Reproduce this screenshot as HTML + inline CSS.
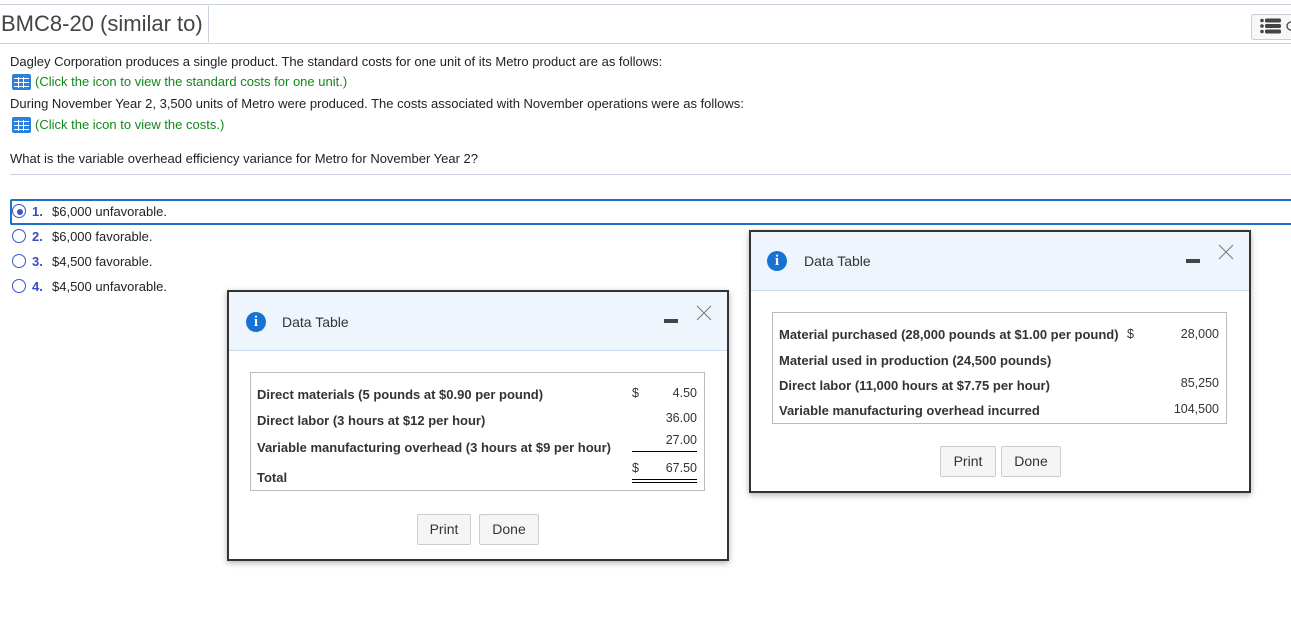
<!DOCTYPE html>
<html><head><style>
body{margin:0;width:1291px;height:632px;background:#fff;font-family:"Liberation Sans",Arial,sans-serif;position:relative;overflow:hidden;color:#222}
.a{position:absolute}
.t{font-size:13px;white-space:nowrap}
.g{color:#13881a}
.ic{position:absolute;width:19px;height:16px;background:#2c7fdc;border-radius:2px}
.ic i{position:absolute;background:#fff}
.rad{position:absolute;width:12px;height:12px;border:1.5px solid #3b55c9;border-radius:50%;background:#fff}
.num{color:#3b49c6;font-weight:bold;display:inline-block;width:20px}
.dlg{position:absolute;border:2px solid #333;background:#fff;box-shadow:0 2px 6px rgba(0,0,0,.3)}
.hd{position:absolute;left:0;top:0;right:0;height:58px;background:#eef5fd;border-bottom:1px solid #c9dcef}
.inf{position:absolute;width:20px;height:20px;border-radius:50%;background:#1773d3;color:#fff;font:bold 15px "Liberation Serif",serif;text-align:center;line-height:20px}
.ttl{position:absolute;font-size:14px;color:#333}
.min{position:absolute;width:14px;height:4px;background:#444}
.tb{position:absolute;border:1px solid #bbb}
.b{font-weight:bold;font-size:13px;color:#333;position:absolute;white-space:nowrap}
.n{font-size:12.5px;color:#333;position:absolute;text-align:right}
.btn{position:absolute;border:1px solid #ccc;border-radius:2px;background:#f5f5f5;font-size:14px;color:#333;text-align:center;line-height:29px}
</style></head><body>
<div class="a" style="left:0;top:4px;width:1291px;height:1px;background:#ccd3e0"></div>
<div class="a" style="left:0;top:43px;width:1291px;height:1px;background:#ccd3e0"></div>
<div class="a" style="left:208px;top:6px;width:1px;height:36px;background:#ccd3e0"></div>
<div class="a" style="left:1px;top:11px;font-size:22px;color:#444">BMC8-20 (similar to)</div>
<div class="a" style="left:1251px;top:14px;width:44px;height:24px;border:1px solid #ccc;border-radius:3px;background:#f7f7f7"></div>
<svg class="a" style="left:1260px;top:18px" width="32" height="16"><g fill="#444"><circle cx="2" cy="2.5" r="1.8"/><circle cx="2" cy="8" r="1.8"/><circle cx="2" cy="13.5" r="1.8"/><rect x="5" y="0.5" width="16" height="4" rx="1.5"/><rect x="5" y="6" width="16" height="4" rx="1.5"/><rect x="5" y="11.5" width="16" height="4" rx="1.5"/></g><path d="M31 4a4 4 0 1 0 0 8" stroke="#444" fill="none" stroke-width="1.3"/></svg>

<div class="a t" style="left:10px;top:54px">Dagley Corporation produces a single product. The standard costs for one unit of its Metro product are as follows:</div>
<div class="ic" style="left:12px;top:74px"><i style="left:2px;top:4px;width:15px;height:1px"></i><i style="left:2px;top:8px;width:15px;height:1px"></i><i style="left:2px;top:12px;width:15px;height:1px"></i><i style="left:6px;top:3px;width:1px;height:11px"></i><i style="left:11px;top:3px;width:1px;height:11px"></i></div>
<div class="a t g" style="left:35px;top:74px">(Click the icon to view the standard costs for one unit.)</div>
<div class="a t" style="left:10px;top:96px">During November Year 2, 3,500 units of Metro were produced. The costs associated with November operations were as follows:</div>
<div class="ic" style="left:12px;top:117px"><i style="left:2px;top:4px;width:15px;height:1px"></i><i style="left:2px;top:8px;width:15px;height:1px"></i><i style="left:2px;top:12px;width:15px;height:1px"></i><i style="left:6px;top:3px;width:1px;height:11px"></i><i style="left:11px;top:3px;width:1px;height:11px"></i></div>
<div class="a t g" style="left:35px;top:117px">(Click the icon to view the costs.)</div>
<div class="a t" style="left:10px;top:151px">What is the variable overhead efficiency variance for Metro for November Year 2?</div>
<div class="a" style="left:10px;top:174px;width:1281px;height:1px;background:#ccd3e0"></div>

<div class="a" style="left:10px;top:199px;width:1290px;height:22px;border:2px solid #1a73c9;border-radius:2px"></div>
<div class="rad" style="left:12px;top:204px"></div><div class="a" style="left:16.5px;top:208.5px;width:6px;height:6px;border-radius:50%;background:#3b55c9"></div>
<div class="a t" style="left:32px;top:204px"><span class="num">1.</span>$6,000 unfavorable.</div>
<div class="rad" style="left:12px;top:229px"></div><div class="a t" style="left:32px;top:229px"><span class="num">2.</span>$6,000 favorable.</div>
<div class="rad" style="left:12px;top:254px"></div><div class="a t" style="left:32px;top:254px"><span class="num">3.</span>$4,500 favorable.</div>
<div class="rad" style="left:12px;top:279px"></div><div class="a t" style="left:32px;top:279px"><span class="num">4.</span>$4,500 unfavorable.</div>

<!-- dialog 2 -->
<div class="dlg" style="left:749px;top:230px;width:498px;height:259px">
<div class="hd"></div>
<div class="inf" style="left:16px;top:19px">i</div>
<div class="ttl" style="left:53px;top:21px">Data Table</div>
<div class="min" style="left:435px;top:27px"></div>
<svg class="a" style="left:467px;top:12px" width="16" height="16"><path d="M1 1L15 15M15 1L1 15" stroke="#777" stroke-width="1"/></svg>
<div class="tb" style="left:21px;top:80px;width:453px;height:110px"></div>
<div class="b" style="left:28px;top:95px">Material purchased (28,000 pounds at $1.00 per pound)</div>
<div class="n" style="left:376px;top:95px">$</div><div class="n" style="left:400px;top:95px;width:68px">28,000</div>
<div class="b" style="left:28px;top:121px">Material used in production (24,500 pounds)</div>
<div class="b" style="left:28px;top:146px">Direct labor (11,000 hours at $7.75 per hour)</div>
<div class="n" style="left:400px;top:144px;width:68px">85,250</div>
<div class="b" style="left:28px;top:171px">Variable manufacturing overhead incurred</div>
<div class="n" style="left:400px;top:170px;width:68px">104,500</div>
<div class="btn" style="left:189px;top:214px;width:54px;height:29px">Print</div>
<div class="btn" style="left:250px;top:214px;width:58px;height:29px">Done</div>
</div>

<!-- dialog 1 -->
<div class="dlg" style="left:227px;top:290px;width:498px;height:267px">
<div class="hd"></div>
<div class="inf" style="left:17px;top:20px">i</div>
<div class="ttl" style="left:53px;top:22px">Data Table</div>
<div class="min" style="left:435px;top:27px"></div>
<svg class="a" style="left:467px;top:13px" width="16" height="16"><path d="M1 1L15 15M15 1L1 15" stroke="#777" stroke-width="1"/></svg>
<div class="tb" style="left:21px;top:80px;width:453px;height:117px"></div>
<div class="b" style="left:28px;top:95px">Direct materials (5 pounds at $0.90 per pound)</div>
<div class="n" style="left:403px;top:94px">$</div><div class="n" style="left:400px;top:94px;width:68px">4.50</div>
<div class="b" style="left:28px;top:121px">Direct labor (3 hours at $12 per hour)</div>
<div class="n" style="left:400px;top:119px;width:68px">36.00</div>
<div class="b" style="left:28px;top:148px">Variable manufacturing overhead (3 hours at $9 per hour)</div>
<div class="n" style="left:400px;top:141px;width:68px">27.00</div>
<div class="a" style="left:403px;top:159px;width:65px;height:1px;background:#000"></div>
<div class="n" style="left:403px;top:169px">$</div><div class="n" style="left:400px;top:169px;width:68px">67.50</div>
<div class="b" style="left:28px;top:178px">Total</div>
<div class="a" style="left:403px;top:187px;width:65px;height:4px;border-top:1px solid #000;border-bottom:1px solid #000;box-sizing:border-box"></div>
<div class="btn" style="left:188px;top:222px;width:52px;height:29px">Print</div>
<div class="btn" style="left:250px;top:222px;width:58px;height:29px">Done</div>
</div>
</body></html>
